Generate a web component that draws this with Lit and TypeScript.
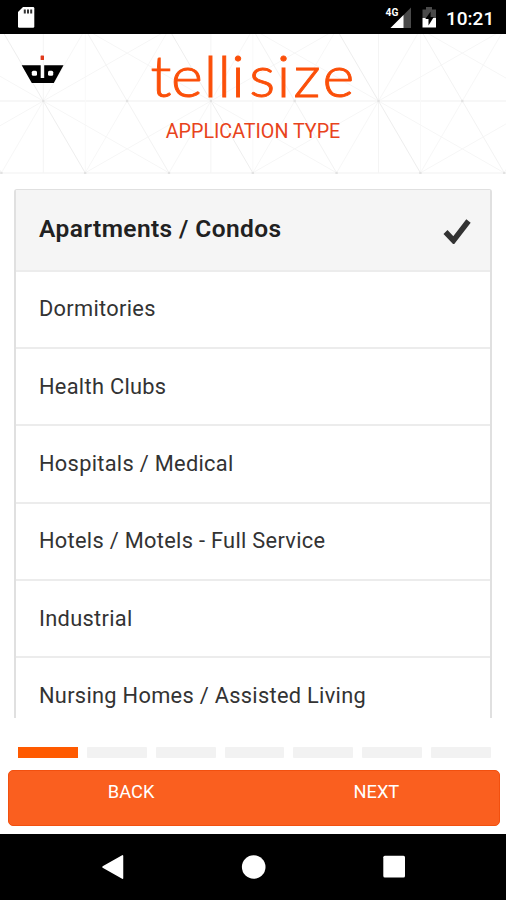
import { LitElement, html, svg, css } from "lit";
import { customElement, property } from "lit/decorators.js";
import { classMap } from "lit/directives/class-map.js";

@customElement("status-bar")
class StatusBar extends LitElement {
  static styles = css`
    :host { display: flex; height: 34px; box-sizing: border-box; background: #000; color: #fff; justify-content: space-between; }
    svg { display: block; }
    .right { display: flex; }
    .time { font: 500 19px/37px Roboto, sans-serif; width: 60px; }
    .net { font: 700 11.5px Roboto, sans-serif; fill: #fff; }
  `;
  render() {
    return html`
      <svg width="60" height="34" viewBox="0 0 60 34">
        <path d="M23 7H33q1.300 0 1.300 1.300V26.500q0 1.300-1.300 1.300H19.300q-1.300 0-1.300-1.300V12z" fill="#fff" />
        <path d="M23.800 9.500h2v4h-2zM27 9.500h2v4h-2zM30.200 9.500h2v4h-2z" fill="#333" />
      </svg>
      <div class="right">
        <svg width="61" height="34" viewBox="385 0 61 34">
          <path d="M390.500 28L411 7.500V28z" fill="#4a4a4a" />
          <path d="M390.500 28L403.500 15V28z" fill="#fff" />
          <text class="net" x="385.600" y="16.400" textLength="12.800" lengthAdjust="spacingAndGlyphs">4G</text>
          <path d="M426 7h6v2.500h4V18H422.500V9.500h3.500z" fill="#4a4a4a" />
          <path d="M422.500 18H436v9.500H422.500z" fill="#fff" />
          <path d="M430.600 11.500v5.500h3.200l-5.300 8.500V19h-3.200z" fill="#000" />
        </svg>
        <div class="time">10:21</div>
      </div>
    `;
  }
}

@customElement("app-header")
class AppHeader extends LitElement {
  static styles = css`
    :host { display: block; position: relative; height: 140px; background: #fff; overflow: hidden; }
    .pattern { position: absolute; inset: 0; }
    .content { position: relative; display: flex; flex-direction: column; align-items: center; }
    .robot { position: absolute; left: 21px; top: 20px; }
    .brand { display: block; overflow: visible; }
    .word { font: 300 57px Lato, sans-serif; fill: #fb4f09; stroke: #fb4f09; stroke-width: 0.9px; }
    .title { font: 400 19.7px/24px Roboto, sans-serif; color: #e8431c; margin-top: 7px; white-space: nowrap; }
  `;
  private lattice() {
    const step = 83.8;
    const mid = 67;
    const low = 139;
    const lines: [number, number, number, number, string][] = [
      [0, mid, 506, mid, "#efefef"],
      [0, low, 506, low, "#f1f1f1"],
    ];
    for (let i = -2; i < 8; i++) {
      const x = 43.3 + i * step;
      lines.push([x - 42, -5, x + 42, low, i % 2 ? "#f3f3f3" : "#eeeeee"]);
      lines.push([x + 42, -5, x - 42, low, "#f7f7f7"]);
      if (i % 2 === 0) {
        lines.push([x, 0, x, low, "#f4f4f4"]);
        lines.push([x + 42, 0, x + 42, low, "#f9f9f9"]);
        lines.push([x - 126, -5, x + 126, low, "#f6f6f6"]);
        lines.push([x + 126, -5, x - 126, low, "#f6f6f6"]);
      }
    }
    return lines.map(([x1, y1, x2, y2, c]) => svg`<line x1=${x1} y1=${y1} x2=${x2} y2=${y2} stroke=${c} />`);
  }
  private nodes() {
    return [0, 1, 2, 3, 4, 5, 6].map((i) => svg`
      <circle cx=${43.3 + i * 83.8} cy="67" r="1.300" fill="#e2e2e2" />
      <circle cx=${1.4 + i * 83.8} cy="139" r="1.300" fill="#e2e2e2" />`);
  }
  render() {
    return html`
      <svg class="pattern" width="506" height="140" viewBox="0 0 506 140">${this.lattice()}${this.nodes()}</svg>
      <div class="content">
        <svg class="brand" width="220" height="79" viewBox="143 34 220 79">
          <text class="word" transform="scale(1.07 1)" y="97" x="140.700 159.800 190.400 203.300 216.100 232.900 258.700 274.400 301.400">tellisize</text>
        </svg>
        <div class="title">APPLICATION TYPE</div>
      </div>
      <svg class="robot" width="44" height="32" viewBox="0 0 44 32">
        <path d="M0.700 11.200H19.700V24h3.500V11.200H42.500L32.800 29H10.800z" fill="#000" />
        <rect x="10.800" y="16.800" width="5.200" height="5" rx="1.500" fill="#fff" />
        <rect x="27" y="16.800" width="5.200" height="5" rx="1.500" fill="#fff" />
        <rect x="19.600" y="1.500" width="3.400" height="4.500" rx=".6" fill="#e03a1c" />
      </svg>
    `;
  }
}

@customElement("option-list")
class OptionList extends LitElement {
  @property({ type: Array }) items: string[] = [];
  @property({ type: Number }) selected = 0;
  static styles = css`
    :host { display: block; height: 529px; overflow: hidden; margin: 15px 14px 0; }
    .list { border: 2px solid #e0e0e0; border-top-width: 1px; border-radius: 3px; background: #fff; }
    .row { display: flex; align-items: center; justify-content: space-between; box-sizing: border-box; height: 77.35px;
      padding: 0 19px 0 23px; border-bottom: 2px solid #ececec;
      font: 400 21.8px/28px Roboto, sans-serif; color: #333; letter-spacing: 0.3px; white-space: nowrap; }
    .row.on { height: 81.5px; padding-bottom: 1px; background: #f5f5f5; font-weight: 600; font-size: 24.5px; color: #212121; letter-spacing: 0.4px; }
    svg { display: block; margin-top: 4px; }
  `;
  render() {
    return html`<div class="list">
      ${this.items.map((t, i) => html`
        <div class=${classMap({ row: true, on: i === this.selected })}>
          <span>${t}</span>
          ${i === this.selected
            ? html`<svg width="28" height="26" viewBox="0 0 28 26"><path d="M2.500 14L10.500 22.500L25.500 3" fill="none" stroke="#333" stroke-width="5.500" /></svg>`
            : null}
        </div>`)}
    </div>`;
  }
}

@customElement("app-root")
class AppRoot extends LitElement {
  private items = [
    "Apartments / Condos",
    "Dormitories",
    "Health Clubs",
    "Hospitals / Medical",
    "Hotels / Motels - Full Service",
    "Industrial",
    "Nursing Homes / Assisted Living",
  ];
  static styles = css`
    :host { display: flex; flex-direction: column; width: 506px; height: 900px; overflow: hidden; background: #fff; }
    .steps { display: flex; gap: 9px; padding: 0 15px 0 18px; margin-top: 29px; }
    .step { flex: 1; height: 11px; background: #f2f2f2; border-radius: 1px; }
    .step.on { background: #ff5a00; border-radius: 0; }
    .actions { display: flex; height: 56px; margin: 12px 6px 0 7.5px; background: #fa5f1f; border-radius: 5px; box-sizing: border-box; border: 1px solid #f2500f; }
    .action { flex: 1; text-align: center; font: 400 18.3px/41px Roboto, sans-serif; color: #fff; }
    .nav { display: flex; margin-top: auto; height: 66px; background: #000; }
  `;
  render() {
    return html`
      <status-bar></status-bar>
      <app-header></app-header>
      <option-list .items=${this.items} .selected=${0}></option-list>
      <div class="steps">
        ${[0, 1, 2, 3, 4, 5, 6].map((i) => html`<div class=${classMap({ step: true, on: i === 0 })}></div>`)}
      </div>
      <div class="actions">
        <div class="action">BACK</div>
        <div class="action">NEXT</div>
      </div>
      <div class="nav">
        <svg width="506" height="66" viewBox="0 834 506 66">
          <path d="M103 867L122.500 855.800V878.200z" fill="#fff" stroke="#fff" stroke-width="1.500" stroke-linejoin="round" />
          <circle cx="253.700" cy="867" r="11.800" fill="#fff" />
          <rect x="383.300" y="855.800" width="21.700" height="21.700" rx="1.500" fill="#fff" />
        </svg>
      </div>
    `;
  }
}
